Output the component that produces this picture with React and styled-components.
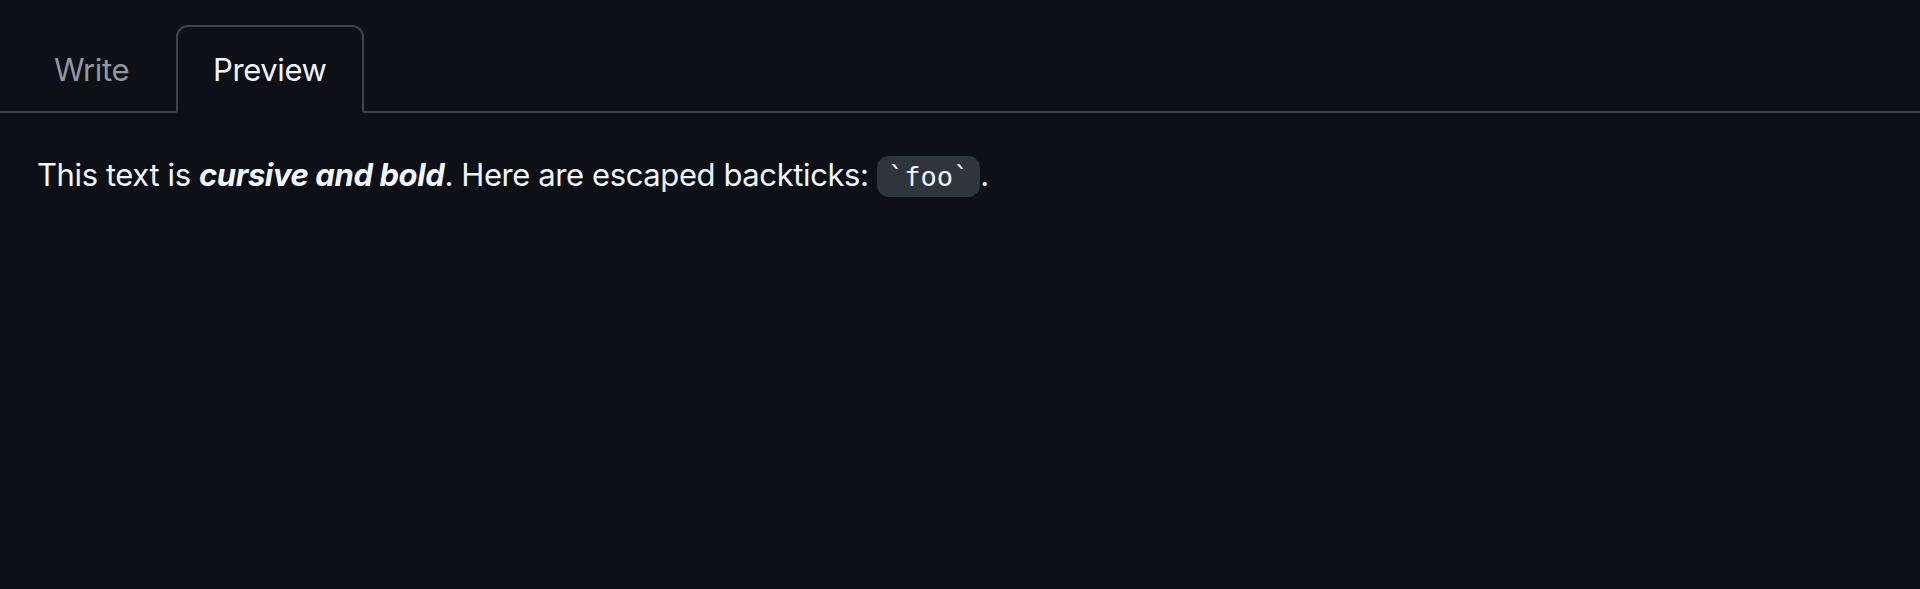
import React from "react";
import styled, { createGlobalStyle } from "styled-components";

const GlobalStyle = createGlobalStyle`
  html, body {
    margin: 0;
    padding: 0;
    background: #0d1117;
  }
  body {
    font-family: Inter, "Liberation Sans", sans-serif;
    color: #f0f6fc;
  }
`;

const Page = styled.div`
  min-height: 589px;
  background: #0d1117;
`;

const TabNav = styled.nav`
  display: flex;
  align-items: flex-end;
  gap: 10px;
  height: 113px;
  box-sizing: border-box;
  padding-left: 17px;
  border-bottom: 2px solid #3d444d;
`;

const Tab = styled.button`
  display: flex;
  align-items: center;
  justify-content: center;
  height: 88px;
  margin-bottom: -2px;
  box-sizing: border-box;
  padding: 0 35px;
  font-family: inherit;
  font-size: 31px;
  letter-spacing: -0.4px;
  line-height: 1;
  color: ${({ active }) => (active ? "#f0f6fc" : "#9198a1")};
  background: ${({ active }) => (active ? "#0d1117" : "transparent")};
  border: 2px solid ${({ active }) => (active ? "#3d444d" : "transparent")};
  border-bottom: 2px solid ${({ active }) => (active ? "#0d1117" : "transparent")};
  border-radius: 12px 12px 0 0;
  cursor: pointer;
`;

const Body = styled.div`
  padding: 39px 37px;
`;

const Paragraph = styled.p`
  margin: 0;
  font-size: 31px;
  letter-spacing: -0.4px;
  line-height: 1.5;
  color: #f0f6fc;
`;

const Code = styled.code`
  font-family: "DejaVu Sans Mono", "Liberation Mono", monospace;
  font-size: 27px;
  letter-spacing: 0;
  padding: 5px 11px;
  border-radius: 12px;
  background: #2f353d;
`;

export default function App() {
  return (
    <Page>
      <GlobalStyle />
      <TabNav>
        <Tab>Write</Tab>
        <Tab active>Preview</Tab>
      </TabNav>
      <Body>
        <Paragraph>
          This text is <strong><em>cursive and bold</em></strong>. Here are escaped backticks: <Code>`foo`</Code>.
        </Paragraph>
      </Body>
    </Page>
  );
}
